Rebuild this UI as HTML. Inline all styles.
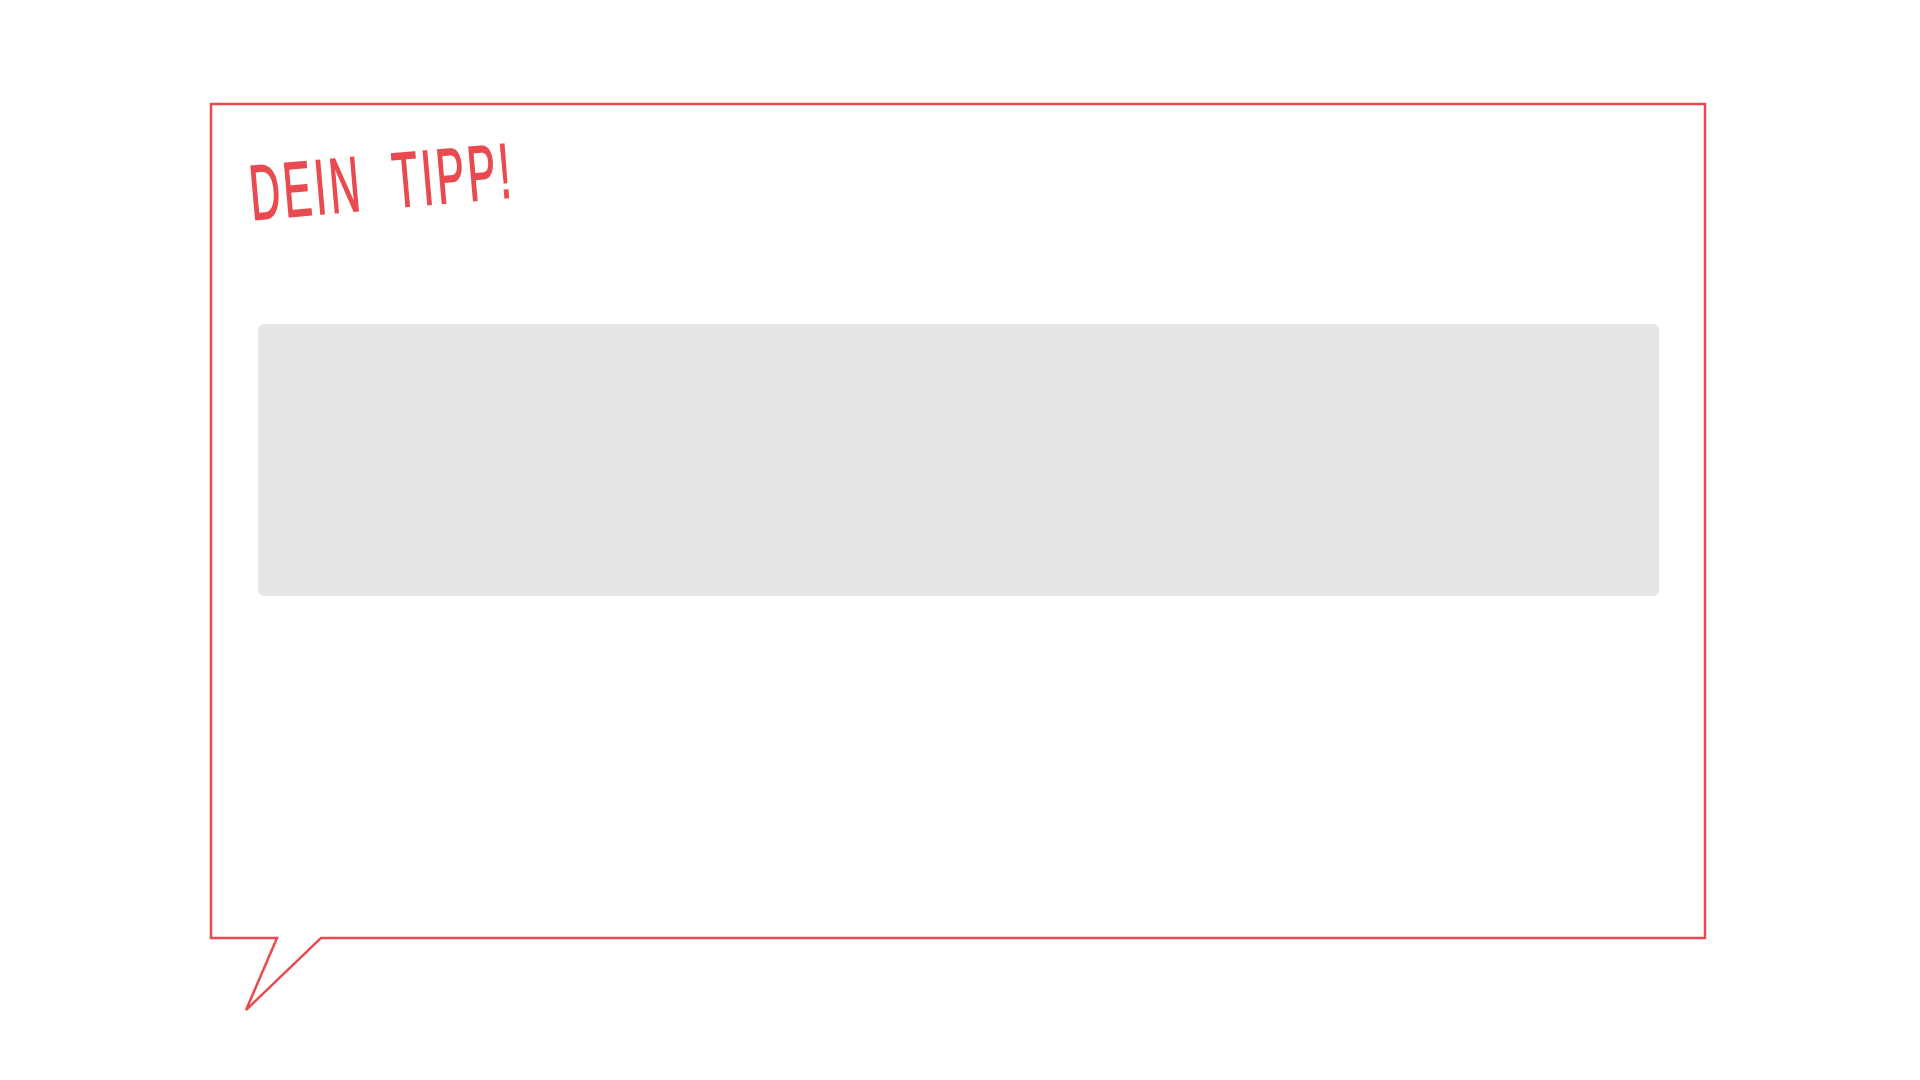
<!DOCTYPE html>
<html><head><meta charset="utf-8"><style>
html,body{margin:0;padding:0;background:#fff;width:1920px;height:1080px;overflow:hidden;position:relative}
svg{position:absolute;left:0;top:0}
.gray{position:absolute;left:258px;top:324px;width:1401px;height:272px;background:#e5e5e5;border-radius:6px}
.title{position:absolute;left:253px;top:154px;font-family:"Liberation Sans Narrow","Liberation Sans",sans-serif;font-size:78px;color:#e84a4f;-webkit-text-stroke:1.5px #e84a4f;letter-spacing:6px;transform-origin:left bottom;transform:rotate(-5deg) scaleX(0.54);white-space:nowrap;font-weight:normal;line-height:1}
</style></head><body>
<svg width="1920" height="1080">
<path d="M211 104 L1705 104 L1705 938 L321 938 L246 1010 L277 938 L211 938 Z" fill="none" stroke="#e84a4f" stroke-width="2.5" stroke-linejoin="miter"/>
</svg>
<div class="gray"></div>
<div class="title">DEIN&nbsp;&nbsp;TIPP!</div>
</body></html>
